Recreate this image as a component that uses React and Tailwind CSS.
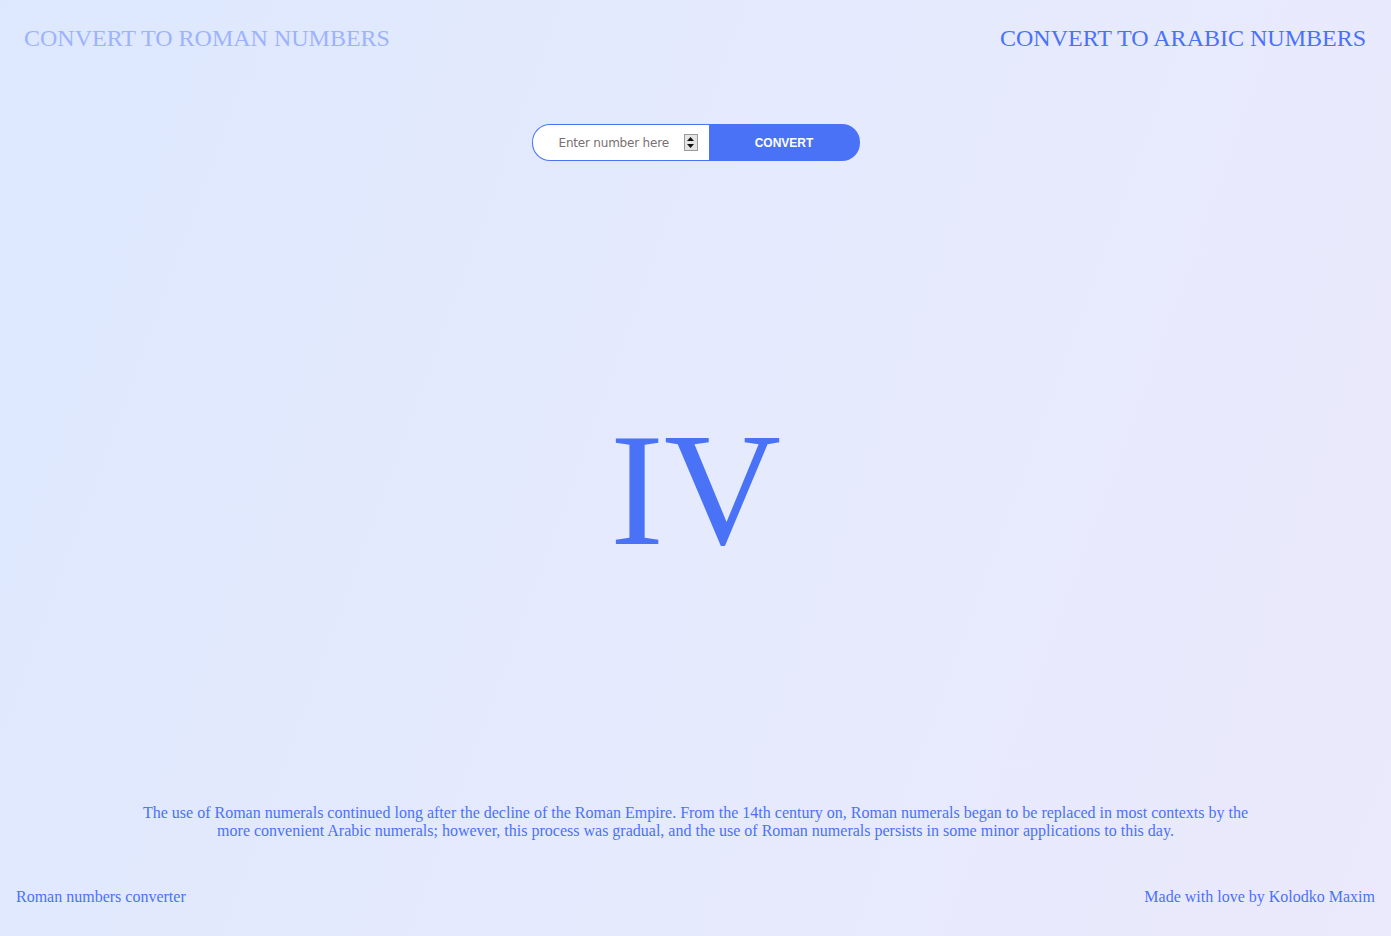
import React from "react";

export default function App() {
  return (
    <div className="w-full h-[936px] overflow-hidden flex flex-col bg-[linear-gradient(110deg,#dde8fe_0%,#e6eafd_55%,#ebe9fc_100%)] font-['Liberation_Serif',serif]">
      <header className="flex justify-between pl-6 pr-[25px] pt-[25px] text-[24px] leading-[27px]">
        <a className="text-[#9db3fb]">CONVERT TO ROMAN NUMBERS</a>
        <a className="text-[#4a72f7]">CONVERT TO ARABIC NUMBERS</a>
      </header>

      <form className="mt-[72px] mx-auto flex h-[37px] w-[328px]" onSubmit={(e) => e.preventDefault()}>
        <div className="flex items-center w-[177px] h-full bg-white border border-[#4a72f7] border-r-0 rounded-l-[18px] pl-[26px] pr-[11px]">
          <input
            type="text"
            placeholder="Enter number here"
            className="flex-1 min-w-0 outline-none bg-transparent text-[12px] pt-[1px] font-['DejaVu_Sans',sans-serif] text-[#333] placeholder:text-[#7a7070] tracking-[-0.2px]"
          />
          <div className="w-[14px] h-[17px] bg-[#e4e4e4] border border-[#9a9a9a] flex flex-col items-center justify-center gap-[3px]">
            <svg width="7" height="4" viewBox="0 0 7 4"><path d="M3.5 0 L7 4 L0 4 Z" fill="#111" /></svg>
            <svg width="7" height="4" viewBox="0 0 7 4"><path d="M0 0 L7 0 L3.5 4 Z" fill="#111" /></svg>
          </div>
        </div>
        <button
          type="submit"
          className="w-[151px] h-full bg-[#4a72f7] text-white rounded-r-[18px] text-[12px] font-bold font-['Liberation_Sans',sans-serif]"
        >
          CONVERT
        </button>
      </form>

      <div className="mt-[236px] text-center text-[162px] leading-[186px] text-[#4a72f7]">IV</div>

      <p className="mt-[221px] mx-auto w-[1120px] text-center text-[16px] leading-[18px] text-[#4a72f7]">
        The use of Roman numerals continued long after the decline of the Roman Empire. From the 14th century on, Roman numerals began to be replaced in most contexts by the more convenient Arabic numerals; however, this process was gradual, and the use of Roman numerals persists in some minor applications to this day.
      </p>

      <footer className="mt-[48px] flex justify-between px-4 text-[16px] leading-[18px] text-[#4a72f7]">
        <span>Roman numbers converter</span>
        <span>Made with love by Kolodko Maxim</span>
      </footer>
    </div>
  );
}
